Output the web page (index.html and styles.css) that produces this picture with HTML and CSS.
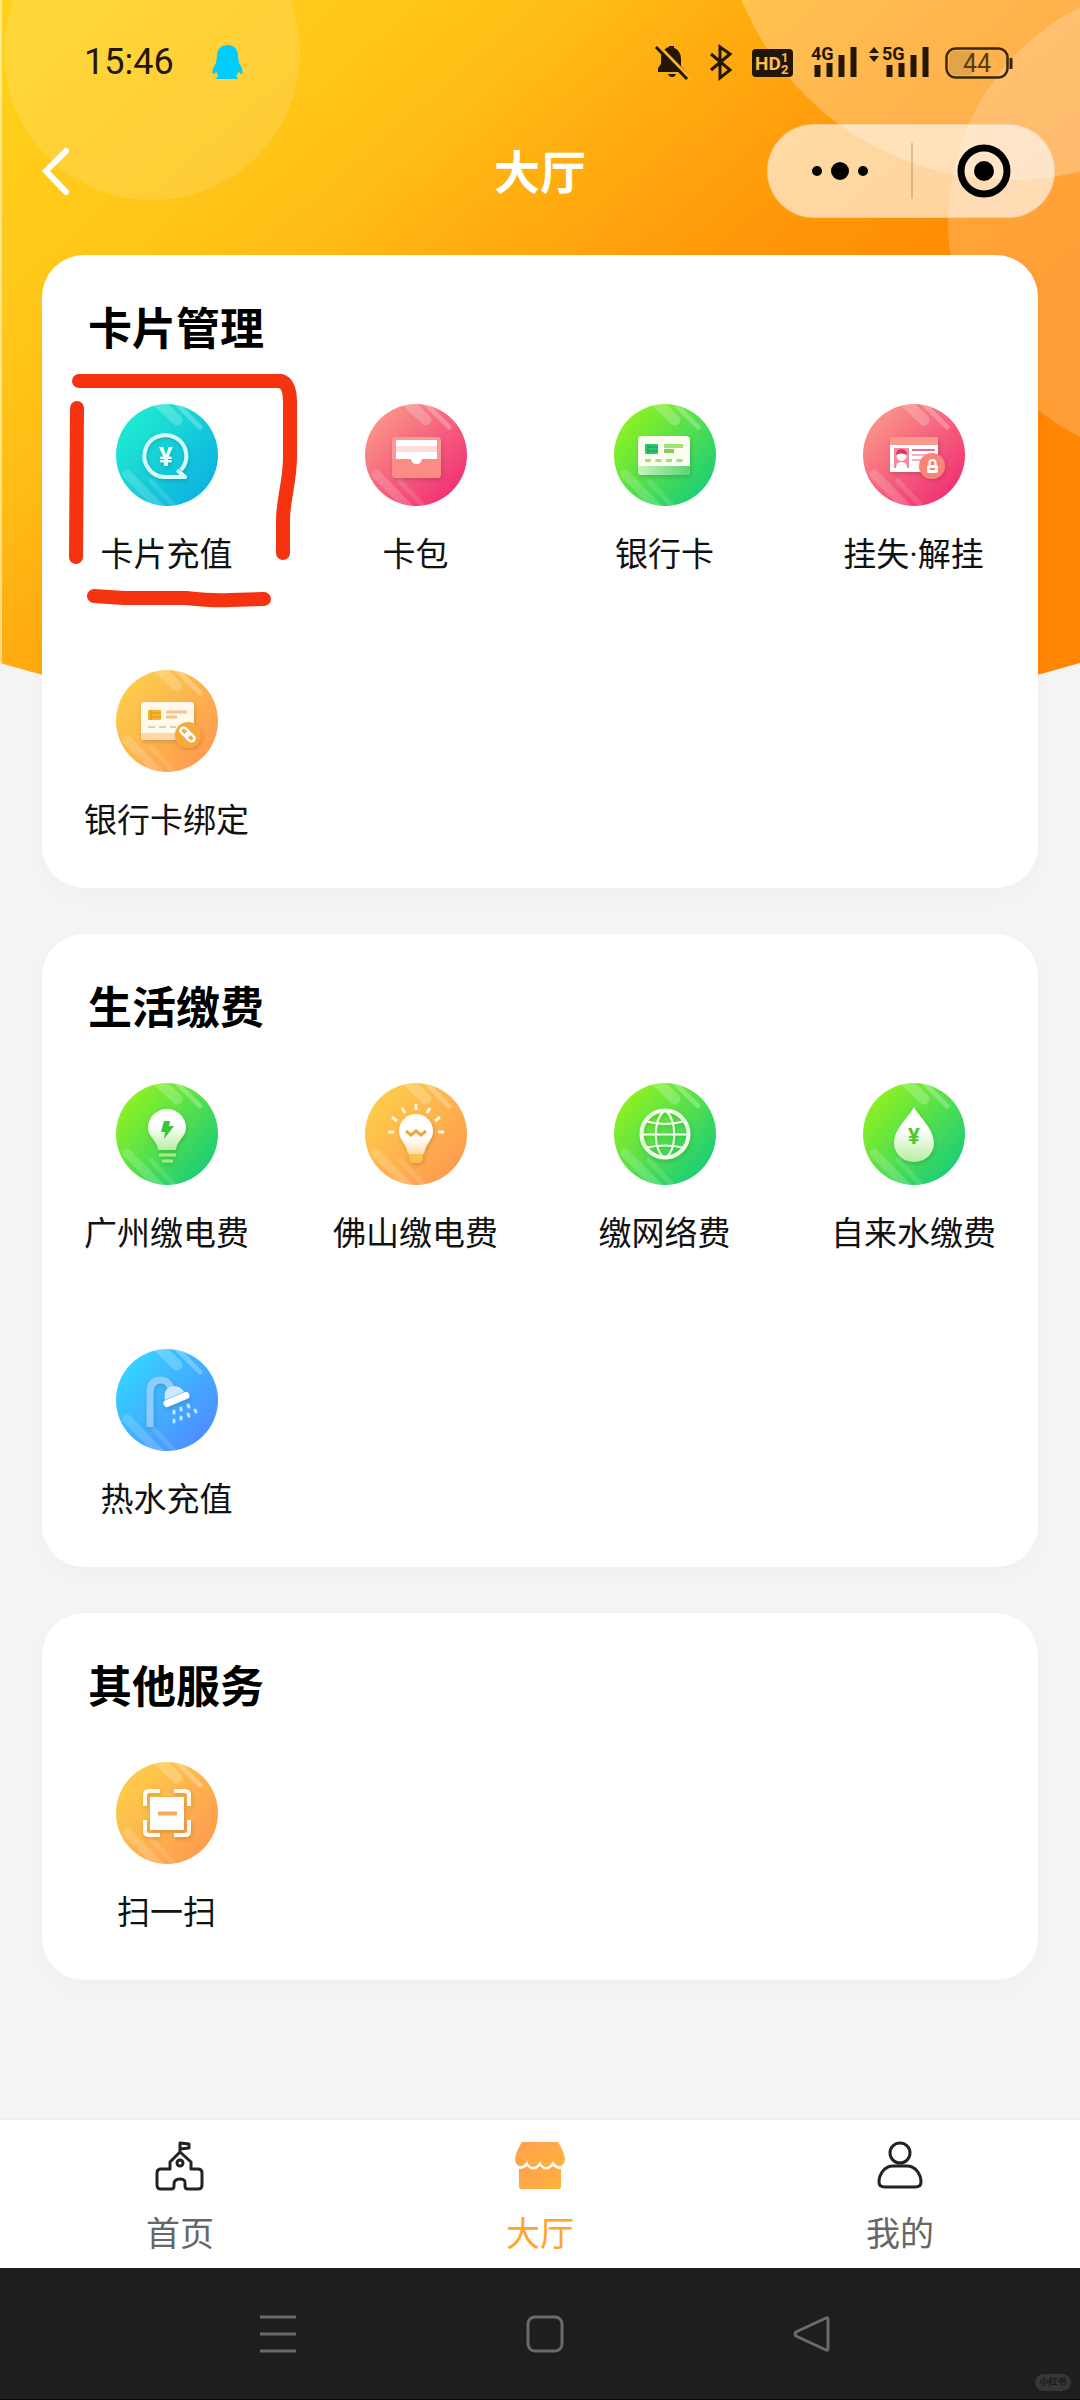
FILE: index.html
```html
<!DOCTYPE html>
<html lang="zh-CN">
<head>
<meta charset="utf-8">
<meta name="viewport" content="width=device-width, initial-scale=1">
<title>大厅</title>
<link rel="stylesheet" href="styles.css">
</head>
<body>
<!-- Shared gradients and the glossy base of the service icons -->
<svg class="defs" aria-hidden="true">
  <defs>
    <linearGradient id="teal" x1="0.05" y1="0.1" x2="0.95" y2="0.9"><stop offset="0" stop-color="#20efd0"/><stop offset="1" stop-color="#0caee2"/></linearGradient>
    <linearGradient id="pink" x1="0.05" y1="0.1" x2="0.9" y2="0.95"><stop offset="0" stop-color="#fb9a88"/><stop offset="1" stop-color="#f02a72"/></linearGradient>
    <linearGradient id="green" x1="0.05" y1="0.1" x2="0.95" y2="0.9"><stop offset="0" stop-color="#96f41c"/><stop offset="1" stop-color="#14cb7c"/></linearGradient>
    <linearGradient id="gold" x1="0.05" y1="0.1" x2="0.95" y2="0.9"><stop offset="0" stop-color="#fdd04a"/><stop offset="1" stop-color="#ff9850"/></linearGradient>
    <linearGradient id="blue" x1="0.05" y1="0.1" x2="0.95" y2="0.9"><stop offset="0" stop-color="#32d8ff"/><stop offset="1" stop-color="#5088ff"/></linearGradient>
    <linearGradient id="mint" x1="0" y1="0" x2="0" y2="1"><stop offset="0.4" stop-color="#fff"/><stop offset="1" stop-color="#b8eea0"/></linearGradient>
    <linearGradient id="cream" x1="0" y1="0" x2="0" y2="1"><stop offset="0.6" stop-color="#fff"/><stop offset="1" stop-color="#ffe0a8"/></linearGradient>
    <linearGradient id="band" x1="0" y1="0" x2="1" y2="0"><stop offset="0" stop-color="#c5f3c0"/><stop offset="1" stop-color="#5cd473"/></linearGradient>
    <linearGradient id="store" x1="0" y1="0" x2="1" y2="1"><stop offset="0" stop-color="#ff9f52"/><stop offset="1" stop-color="#ffb43a"/></linearGradient>
    <filter id="lift" x="-20%" y="-20%" width="150%" height="150%"><feDropShadow dx="1" dy="2" stdDeviation="2" flood-color="#000" flood-opacity="0.16"/></filter>
    <clipPath id="disc"><circle cx="51" cy="51" r="51"/></clipPath>
    <symbol id="shine" viewBox="0 0 102 102">
      <g clip-path="url(#disc)" stroke="#fff" stroke-linecap="round" fill="none">
        <path d="M38-6 61 16" stroke-width="11" stroke-opacity="0.22"/>
        <path d="M58-3 84 23" stroke-width="5" stroke-opacity="0.26"/>
        <path d="M11 70 48 108" stroke-width="9" stroke-opacity="0.17"/>
        <path d="M35 77 64 108" stroke-width="5" stroke-opacity="0.12"/>
      </g>
    </symbol>
  </defs>
</svg>

<div class="screen">
  <svg class="backdrop" viewBox="0 0 1080 740" aria-hidden="true">
    <defs>
      <linearGradient id="sun" gradientUnits="userSpaceOnUse" x1="0" y1="0" x2="590" y2="680">
        <stop offset="0" stop-color="#ffd21c"/><stop offset="0.25" stop-color="#ffc91a"/><stop offset="0.42" stop-color="#ffbd15"/><stop offset="0.56" stop-color="#ffac10"/><stop offset="0.75" stop-color="#ff970a"/><stop offset="1" stop-color="#ff8604"/>
      </linearGradient>
      <clipPath id="dome"><path d="M0 0H1080V663Q540 820 0 663Z"/></clipPath>
    </defs>
    <g clip-path="url(#dome)">
      <path d="M0 0H1080V740H0Z" fill="url(#sun)"/>
      <circle cx="152" cy="52" r="148" fill="#fff" fill-opacity="0.13"/>
      <circle cx="1010" cy="-110" r="290" fill="#fff" fill-opacity="0.27"/>
      <circle cx="1189" cy="222" r="241" fill="#fff" fill-opacity="0.2"/>
      <path d="M0 0H2V700H0Z" fill="#fff" fill-opacity="0.5"/>
    </g>
  </svg>

  <div class="status">
    <time class="clock">15:46</time>
    <svg class="penguin" width="32" height="36" viewBox="212 45 32 36" aria-label="QQ"><path fill="#0cf" d="M227.500 46C234 46 238 50 238 57L239 64C242 68 243 72 242.500 75Q240 75 238.500 72.500Q238 75 236 77Q238 78 238 80H216Q216 78 218.500 77Q216.500 75 216.500 72.500Q215 75 212.500 75C212 72 213 68 216 64L217 57C217 50 221 46 227.500 46Z"/></svg>
    <div class="signals">
      <svg width="41" height="40" viewBox="654 42 41 40" aria-label="静音"><path fill="#221705" d="M669 47V46h5v2c5 2 7 6 7 11v7l5 6H658v-4l3-4v-5c0-6 2-10 8-12Z"/><path d="M668 74h8q-1 3-4 3t-4-3Z" fill="#221705"/><path d="M658 45 691 79" stroke="#ffb232" stroke-width="3"/><path d="M656 47 687 79" stroke="#221705" stroke-width="3"/></svg>
      <svg width="37" height="40" viewBox="705 42 37 40" aria-label="蓝牙"><path d="M711 54 730 70 720 78V47L730 54 711 70" fill="none" stroke="#221705" stroke-width="3"/></svg>
      <svg width="44" height="40" viewBox="752 42 44 40" aria-label="HD"><rect x="752" y="49" width="41" height="28" rx="4" fill="#221705"/><text x="755" y="70" class="hd">HD</text><text x="781" y="62" class="hd-n">1</text><text x="781" y="74" class="hd-n">2</text></svg>
      <svg width="53" height="40" viewBox="806 42 53 40" aria-label="4G"><text x="811" y="60" class="net">4G</text><path d="M817.500 65V77M829.500 63V77M841.500 55V77M853.500 47V77" stroke="#221705" stroke-width="6"/></svg>
      <svg width="66" height="40" viewBox="869 42 66 40" aria-label="5G"><path d="M869 53 874 47 879 53ZM869 56H879L874 62Z" fill="#221705"/><text x="882" y="60" class="net">5G</text><path d="M889.500 65V77M901.500 63V77M913.500 55V77M925.500 47V77" stroke="#221705" stroke-width="6"/></svg>
      <svg width="68" height="40" viewBox="945 42 68 40" aria-label="电量"><rect x="949" y="51" width="25" height="24" rx="5" fill="#e0a44a"/><rect x="946.500" y="48.500" width="61" height="29" rx="9" fill="none" stroke="#3a2608" stroke-width="2.500"/><path d="M1011 58V69" stroke="#3a2608" stroke-width="3"/><text x="977" y="72" class="level">44</text></svg>
    </div>
  </div>

  <header class="bar">
    <button class="back" type="button" aria-label="返回"><svg width="32" height="50" viewBox="0 0 32 50"><path d="M25 5 5 25 25 46" fill="none" stroke="#fff" stroke-width="6" stroke-linecap="round"/></svg></button>
    <h1>大厅</h1>
    <div class="capsule">
      <button type="button" aria-label="更多"><svg width="58" height="20" viewBox="0 0 58 20"><circle cx="6" cy="10" r="5"/><circle cx="29" cy="10" r="9"/><circle cx="52" cy="10" r="5"/></svg></button>
      <button type="button" aria-label="关闭"><svg width="54" height="54" viewBox="0 0 54 54"><circle cx="27" cy="27" r="23" fill="none" stroke="#000" stroke-width="7"/><circle cx="27" cy="27" r="10"/></svg></button>
    </div>
  </header>

  <main>
    <section class="card">
      <h2>卡片管理</h2>
      <ul class="grid">
        <li><a href="#recharge">
          <svg class="icon" viewBox="0 0 102 102"><circle cx="51" cy="51" r="51" fill="url(#teal)"/><use href="#shine"/>
            <g filter="url(#lift)"><path d="M65 66A21 21 0 1 0 49 73H69L61 66" fill="none" stroke="#d8fbff" stroke-width="4" stroke-linejoin="round"/><text x="50" y="62" class="yen" fill="#e8ffff">¥</text></g></svg>
          <span>卡片充值</span></a></li>
        <li><a href="#wallet">
          <svg class="icon" viewBox="0 0 102 102"><circle cx="51" cy="51" r="51" fill="url(#pink)"/><use href="#shine"/>
            <g filter="url(#lift)"><rect x="27" y="33" width="49" height="41" rx="4" fill="#fb9a94"/><path d="M31 36H72V60H31Z" fill="#fff"/><path d="M31 42H72V48H31Z" fill="#ffdcdc"/><path d="M27 55H46Q47 60 51.500 60T57 55H76V70Q76 74 72 74H31Q27 74 27 70Z" fill="#fb8c85"/></g><path d="M31 54H72V55H56Q56 60 51.500 60T47 55H31Z" fill="#fff"/></svg>
          <span>卡包</span></a></li>
        <li><a href="#bank">
          <svg class="icon" viewBox="0 0 102 102"><circle cx="51" cy="51" r="51" fill="url(#green)"/><use href="#shine"/>
            <g filter="url(#lift)"><rect x="24" y="32" width="52" height="39" rx="4" fill="#fbfdee"/><path d="M24 62H76V67Q76 71 72 71H28Q24 71 24 67Z" fill="url(#band)"/></g>
            <rect x="31" y="40" width="13" height="10" rx="1" fill="#2ec76c"/><path d="M34 40V50M34 43H44M34 47H44" stroke="#159a5c"/><path d="M50 42H69" stroke="#a4e274" stroke-width="4"/><path d="M50 47H60" stroke="#7fcf58" stroke-width="4"/><path d="M31 56.500H69" stroke="#a4dc84" stroke-width="3" stroke-dasharray="6 4.500"/></svg>
          <span>银行卡</span></a></li>
        <li><a href="#loss">
          <svg class="icon" viewBox="0 0 102 102"><circle cx="51" cy="51" r="51" fill="url(#pink)"/><use href="#shine"/>
            <g filter="url(#lift)"><path d="M27 33H75V68H27Z" fill="#fff"/><path d="M27 33H75V41H27Z" fill="#fb9a8c"/></g>
            <path d="M31 44H46V64H31Z" fill="#f58a9c"/><circle cx="38.500" cy="52" r="5" fill="#fff"/><path d="M33 51Q33 45 38.500 45T44 51Q38 48 33 51Z" fill="#d63a60"/><path d="M33 64Q33 58 38.500 58T44 64Z" fill="#fff"/><path d="M49 46H72" stroke="#e86a94" stroke-width="2"/><path d="M49 51H64M49 56H60" stroke="#f8b0c2" stroke-width="2"/>
            <g filter="url(#lift)"><circle cx="69" cy="62" r="13" fill="#fa8474"/></g><rect x="64" y="61" width="11" height="8" rx="2" fill="#fff"/><path d="M66.500 61V58.500Q66.500 56 69.500 56T72.500 58.500V61" fill="none" stroke="#fff" stroke-width="2"/><path d="M67 65H72" stroke="#fa8474" stroke-width="2"/></svg>
          <span>挂失·解挂</span></a></li>
        <li><a href="#bind">
          <svg class="icon" viewBox="0 0 102 102"><circle cx="51" cy="51" r="51" fill="url(#gold)"/><use href="#shine"/>
            <g filter="url(#lift)"><rect x="25" y="32" width="53" height="38" rx="3" fill="#fff9ee"/><path d="M25 63H78V67Q78 70 75 70H28Q25 70 25 67Z" fill="#ffd7a8"/></g>
            <rect x="32" y="40" width="13" height="10" rx="1" fill="#f8b42c"/><path d="M35 40V50M35 43H45M35 47H45" stroke="#dc9420"/><path d="M50 42H71M50 47H61" stroke="#f8c48c" stroke-width="3"/><path d="M32 57H60" stroke="#e4cdb4" stroke-width="2" stroke-dasharray="7 4"/>
            <g filter="url(#lift)"><circle cx="72" cy="65" r="13" fill="#f6a93c"/></g><g fill="none" stroke="#fff" stroke-width="2.500"><rect x="64" y="59" width="10" height="6" rx="3" transform="rotate(42 69 62)"/><rect x="69" y="64" width="10" height="6" rx="3" transform="rotate(42 74 67)"/></g></svg>
          <span>银行卡绑定</span></a></li>
      </ul>
    </section>

    <section class="card">
      <h2>生活缴费</h2>
      <ul class="grid">
        <li><a href="#gz-power">
          <svg class="icon" viewBox="0 0 102 102"><circle cx="51" cy="51" r="51" fill="url(#green)"/><use href="#shine"/>
            <g filter="url(#lift)"><path d="M51 26A19 19 0 0 1 70 45C70 54 60 58 60 67H42C42 58 32 54 32 45A19 19 0 0 1 51 26Z" fill="url(#mint)"/><path d="M43 72H60M46 78H57" stroke="#a4ec80" stroke-width="3"/></g><path d="M48 38H54L53 43H58L48 56 49 49H45Z" fill="#3cc43c"/></svg>
          <span>广州缴电费</span></a></li>
        <li><a href="#fs-power">
          <svg class="icon" viewBox="0 0 102 102"><circle cx="51" cy="51" r="51" fill="url(#gold)"/><use href="#shine"/>
            <g filter="url(#lift)"><path d="M44 70H58V75Q58 80 51 80T44 75Z" fill="#ffc04a"/><path d="M51 31A17 17 0 0 1 68 48C68 57 60 61 59 71H43C42 61 34 57 34 48A17 17 0 0 1 51 31Z" fill="url(#cream)"/></g>
            <path d="M51 21V27M37 25 40 30M65 25 62 30M27 34 32 38M75 34 70 38M23 49H29M79 49H73" stroke="#fff4dc" stroke-width="3"/><path d="M41 48 46 52 51 48 56 52 61 48" fill="none" stroke="#f2a53c" stroke-width="3"/></svg>
          <span>佛山缴电费</span></a></li>
        <li><a href="#network">
          <svg class="icon" viewBox="0 0 102 102"><circle cx="51" cy="51" r="51" fill="url(#green)"/><use href="#shine"/>
            <g filter="url(#lift)" fill="none" stroke="#f0ffe8" stroke-width="2"><circle cx="51" cy="51" r="23.500" stroke-width="4"/><path d="M50 28C39 38 39 65 50 75M52 28C63 38 63 65 52 75M31 38Q51 44 71 38M31 65Q51 60 71 65M27 51.500H75"/></g></svg>
          <span>缴网络费</span></a></li>
        <li><a href="#water">
          <svg class="icon" viewBox="0 0 102 102"><circle cx="51" cy="51" r="51" fill="url(#green)"/><use href="#shine"/>
            <g filter="url(#lift)"><path d="M51 24C57 35 71 46 71 60A20 19 0 0 1 31 60C31 46 45 35 51 24Z" fill="url(#mint)"/></g><text x="51" y="61" class="yen yen-small" fill="#4cc82e">¥</text></svg>
          <span>自来水缴费</span></a></li>
        <li><a href="#hot-water">
          <svg class="icon" viewBox="0 0 102 102"><circle cx="51" cy="51" r="51" fill="url(#blue)"/><use href="#shine"/>
            <g filter="url(#lift)"><path d="M34 78V43Q34 31 45 31Q52 31 55 39" fill="none" stroke="#8cccff" stroke-width="7"/><path d="M49 51C47 42 52 37 58 37Q65 37 68 43Z" fill="#cfe6ff"/><path d="M51 54.500 70 46.500" stroke="#fff" stroke-width="7" stroke-linecap="round"/></g>
            <path d="M58 62V64M65 59V61M72 56 73 58M79 61 80 63M72 65 73 67M65 68V70M58 71V73" stroke="#c0e8ff" stroke-width="3" stroke-linecap="round"/></svg>
          <span>热水充值</span></a></li>
      </ul>
    </section>

    <section class="card">
      <h2>其他服务</h2>
      <ul class="grid">
        <li><a href="#scan">
          <svg class="icon" viewBox="0 0 102 102"><circle cx="51" cy="51" r="51" fill="url(#gold)"/><use href="#shine"/>
            <g filter="url(#lift)"><path d="M29 44V33Q29 29 33 29H44M58 29H69Q73 29 73 33V44M73 58V69Q73 73 69 73H58M44 73H33Q29 73 29 69V58" fill="none" stroke="#fffaf0" stroke-width="4"/><path d="M34 35H68V68H34Z" fill="#fff"/></g><path d="M42 51.500H61" stroke="#f2ac54" stroke-width="4"/></svg>
          <span>扫一扫</span></a></li>
      </ul>
    </section>
  </main>

  <nav class="tabs">
    <a href="#home"><svg width="50" height="50" viewBox="0 0 50 50"><g fill="none" stroke="#222" stroke-width="3" stroke-linejoin="round"><path d="M25 12V2L34 3V7L25 8M25 11 15 21V28H6Q2 28 2 32V44Q2 48 6 48H16Q19 48 19 45V43Q19 38 25 38T30 43V45Q30 48 33 48H43Q47 48 47 44V32Q47 28 43 28H36V21Z"/><circle cx="25" cy="22" r="3"/></g></svg><span>首页</span></a>
    <a href="#hall" class="active" aria-current="page"><svg width="50" height="50" viewBox="0 0 50 50"><g fill="url(#store)"><path d="M7 1H43Q49 10 50 18Q50 23 46 25Q41 26 38 20Q35 26 31 26T25 20Q22 26 18 26T12 20Q9 26 4 25Q0 23 0 18Q1 10 7 1Z"/><path d="M4 28Q9 28 12 25Q18 32 25 25Q31 32 38 25Q42 29 46 28V46Q46 48 44 48H6Q4 48 4 46Z"/></g></svg><span>大厅</span></a>
    <a href="#me"><svg width="50" height="50" viewBox="0 0 50 50"><g fill="none" stroke="#222" stroke-width="3"><circle cx="25" cy="12" r="10"/><path d="M18 25H32C41 25 46 34 46 41Q46 46 40 46H10Q4 46 4 41C4 34 9 25 18 25Z"/></g></svg><span>我的</span></a>
  </nav>

  <footer class="system">
    <button type="button" aria-label="最近任务"><svg width="38" height="38" viewBox="0 0 38 38"><path d="M1 2H37M1 19H37M1 36H37"/></svg></button>
    <button type="button" aria-label="主屏幕"><svg width="38" height="38" viewBox="0 0 38 38"><rect x="2" y="2" width="34" height="34" rx="7"/></svg></button>
    <button type="button" aria-label="返回上一级"><svg width="38" height="38" viewBox="0 0 38 38"><path d="M33 3Q35 2 35 5V33Q35 36 33 35L3 21Q1 19 3 17Z"/></svg></button>
    <span class="mark">小红书</span>
  </footer>

  <!-- Hand-drawn marker round the card recharge entry -->
  <svg class="marker" width="240" height="240" viewBox="64 370 240 240" aria-hidden="true"><path d="M79 381H281Q290 384 290 402V457C290 482 283 500 283 520V553M77 408 76 557M94 596Q110 597 124 598L186 598Q214 601 230 600L264 599"/></svg>
</div>
</body>
</html>
```
FILE: styles.css
```css
* {
  box-sizing: border-box;
}

body {
  margin: 0;
  background: #f4f4f4;
  color: #111;
  font-family: Roboto, "Noto Sans CJK SC", sans-serif;
}

a {
  color: inherit;
  text-decoration: none;
}

button {
  display: flex;
  align-items: center;
  justify-content: center;
  padding: 0;
  border: 0;
  background: none;
}

svg {
  display: block;
}

.defs {
  position: absolute;
  width: 0;
  height: 0;
}

.screen {
  position: relative;
  display: flex;
  flex-direction: column;
  min-height: 100vh;
}

.backdrop {
  position: absolute;
  top: 0;
  left: 0;
  z-index: -1;
  width: 100%;
  height: auto;
}

/* Status bar */
.status {
  display: flex;
  align-items: center;
  height: 124px;
  padding: 0 67px 0 84px;
}

.clock {
  color: #221705;
  font-size: 36px;
  line-height: 44px;
}

.penguin {
  margin-left: 38px;
}

.signals {
  display: flex;
  gap: 10px;
  margin-left: auto;
}

.hd,
.hd-n {
  fill: #ffbd4c;
  font-size: 19px;
  font-weight: 700;
}

.hd-n {
  font-size: 13px;
}

.net {
  fill: #221705;
  font-size: 18px;
  font-weight: 700;
}

.level {
  fill: #5a3c10;
  font-size: 25px;
  text-anchor: middle;
}

/* Title bar */
.bar {
  display: grid;
  grid-template-columns: 1fr auto 1fr;
  align-items: center;
  height: 94px;
  padding: 0 25px;
}

.back {
  justify-self: start;
  margin-left: 16px;
}

h1 {
  margin: 0;
  padding-top: 4px;
  color: #fff;
  font-size: 46px;
  font-weight: 700;
  line-height: 60px;
}

.capsule {
  display: grid;
  grid-template-columns: 1fr 1fr;
  justify-self: end;
  width: 288px;
  height: 94px;
  border: 1px solid rgba(200, 150, 80, 0.2);
  border-radius: 47px;
  background: rgba(255, 255, 255, 0.62);
}

.capsule button + button {
  margin: 18px 0;
  border-left: 2px solid rgba(160, 120, 70, 0.35);
}

/* Service cards */
main {
  display: flex;
  flex: 1;
  flex-direction: column;
  gap: 46px;
  padding: 37px 42px 46px;
}

.card {
  padding: 45px 0 43px;
  border-radius: 42px;
  background: #fff;
  box-shadow: 0 8px 24px rgba(0, 0, 0, 0.02);
}

h2 {
  margin: 0 0 44px;
  padding: 0 46px;
  color: #000;
  font-size: 44px;
  font-weight: 700;
  line-height: 60px;
}

.grid {
  display: grid;
  grid-template-columns: repeat(4, 1fr);
  row-gap: 91px;
  margin: 0;
  padding: 0;
  list-style: none;
}

.grid a {
  display: flex;
  flex-direction: column;
  align-items: center;
  gap: 25px;
  font-size: 33px;
  line-height: 48px;
  white-space: nowrap;
}

.icon {
  width: 102px;
  height: 102px;
}

.yen {
  font-size: 26px;
  font-weight: 700;
  text-anchor: middle;
}

.yen-small {
  font-size: 22px;
}

/* Tab bar */
.tabs {
  display: grid;
  grid-template-columns: repeat(3, 1fr);
  padding: 21px 0 10px;
  border-top: 1px solid #eee;
  background: #fff;
}

.tabs a {
  display: flex;
  flex-direction: column;
  align-items: center;
  gap: 19px;
  color: #666;
  font-size: 34px;
  line-height: 48px;
}

.tabs .active {
  color: #ffa42c;
}

/* System navigation */
.system {
  position: relative;
  display: grid;
  grid-template-columns: repeat(3, 1fr);
  height: 132px;
  padding: 0 135px 0 144px;
  border-bottom: 1px solid #0c0808;
  background: #1e1e1e;
}

.system svg {
  fill: none;
  stroke: #6a6a6a;
  stroke-width: 3px;
}

.mark {
  position: absolute;
  right: 9px;
  bottom: 8px;
  width: 36px;
  border-radius: 9px;
  background: #363636;
  color: #1a1a1a;
  font-size: 9px;
  font-weight: 700;
  line-height: 17px;
  text-align: center;
}

.marker {
  position: absolute;
  top: 370px;
  left: 64px;
  fill: none;
  stroke: #f53311;
  stroke-width: 14px;
  stroke-linecap: round;
  stroke-linejoin: round;
}
```
